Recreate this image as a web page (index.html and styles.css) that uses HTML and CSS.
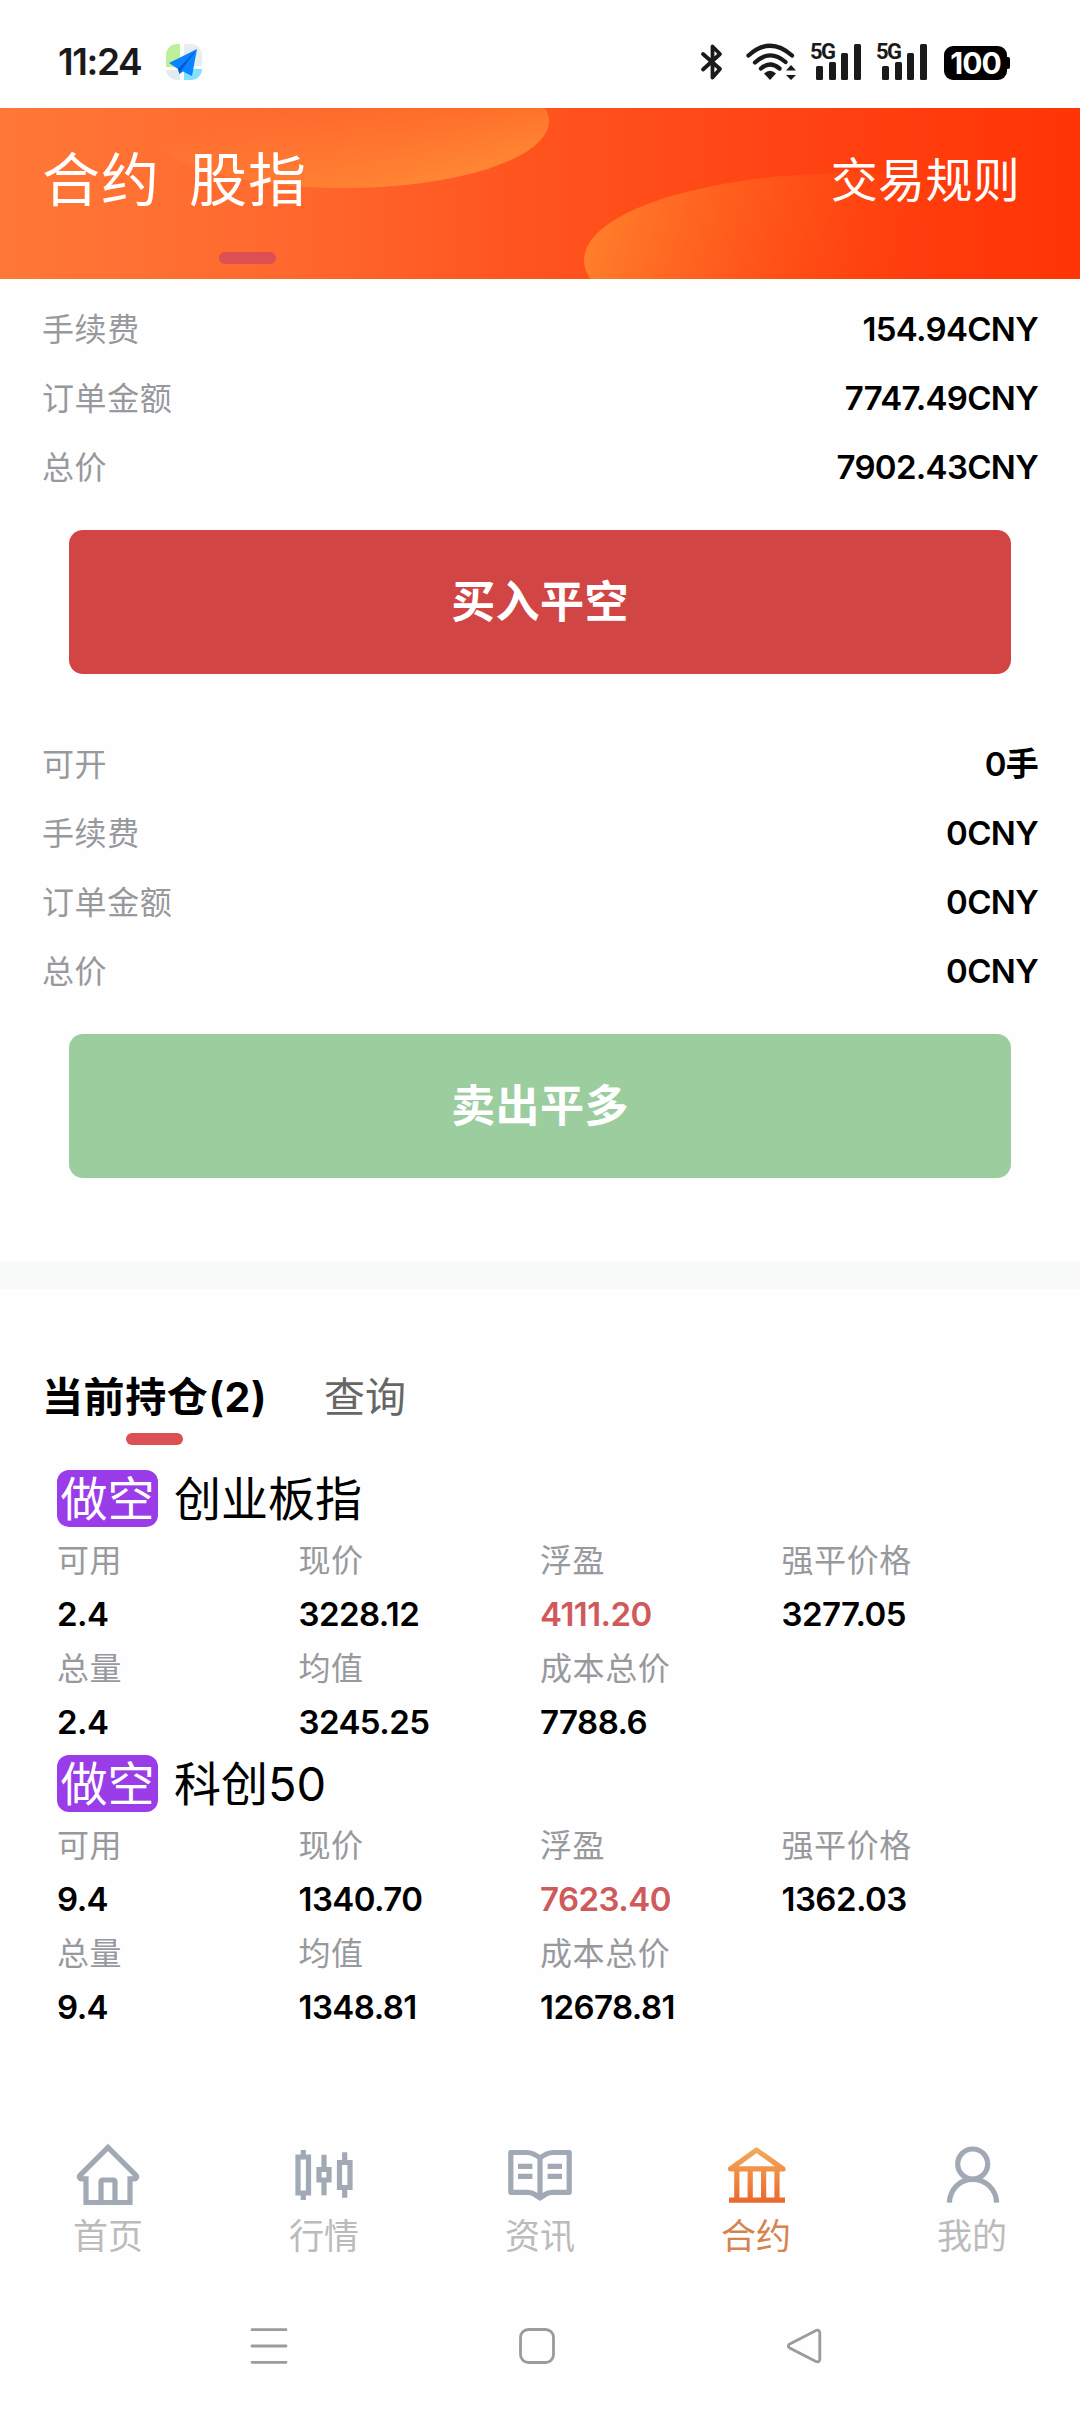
FILE: index.html
```
<!DOCTYPE html>
<html lang="zh-CN">
<head>
  <meta charset="UTF-8" />
  <meta name="viewport" content="width=device-width, initial-scale=1" />
  <title>合约</title>
  <link rel="stylesheet" href="styles.css">
</head>
<body>
  <div class="status-bar">
    <span class="time">11:24</span>
    <svg class="app-icon" width="36" height="36" viewBox="0 0 36 36">
      <defs>
        <clipPath id="app-clip"><rect width="36" height="36" rx="11"/></clipPath>
      </defs>
      <g clip-path="url(#app-clip)">
        <rect width="14" height="23" fill="#bdf09a"/>
        <rect x="18" width="18" height="22" fill="#e6eeef"/>
        <rect y="26" width="14" height="10" fill="#e3ebee"/>
        <rect x="18" y="25" width="18" height="11" fill="#85e0ff"/>
      </g>
      <path d="M31 5 26 32 17 27.500 13.500 30 12 25 3 19z" fill="#0a84ff"/>
      <path d="M31 5 12 25l1.500 5 2-4z" fill="#0756d8"/>
    </svg>
    <div class="status-icons">
      <svg class="bluetooth" width="24" height="38" viewBox="0 0 24 38">
        <path d="M3 11 20 26l-7.500 8.500V3.500l7.500 7.500L3 26.500" fill="none" stroke="#1a1a1a" stroke-width="3.800" stroke-linejoin="round" stroke-linecap="round"/>
      </svg>
      <svg class="wifi" width="52" height="38" viewBox="0 0 52 38">
        <g fill="none" stroke="#1a1a1a" stroke-width="4.300" stroke-linecap="round">
          <path d="M3.500 12.500Q25 -7 47 12.500"/>
          <path d="M10 19.500Q25 5.500 40.500 19"/>
          <path d="M16 25.500Q25 17.500 34.500 25.500"/>
        </g>
        <path d="M25 37l-6-6.500q6-5.500 12 0z" fill="#1a1a1a"/>
        <path d="M46 22l5 5.500H41zM46 37l5-5H41z" fill="#1a1a1a"/>
      </svg>
      <div class="signal">
        <span>5G</span>
        <i class="bar b1"></i><i class="bar b2"></i><i class="bar b3"></i><i class="bar b4"></i>
      </div>
      <div class="signal">
        <span>5G</span>
        <i class="bar b1"></i><i class="bar b2"></i><i class="bar b3"></i><i class="bar b4"></i>
      </div>
      <div class="battery">100</div>
    </div>
  </div>

  <div class="header">
    <svg class="header-bg" width="1080" height="171" viewBox="0 0 1080 171">
      <defs>
        <linearGradient id="bg" x1="0" x2="1" y1="0" y2="0">
          <stop offset="0" stop-color="#ff7838"/>
          <stop offset="0.280" stop-color="#ff672d"/>
          <stop offset="0.500" stop-color="#ff531e"/>
          <stop offset="0.800" stop-color="#ff3f0f"/>
          <stop offset="1" stop-color="#ff3407"/>
        </linearGradient>
        <linearGradient id="blob1" gradientUnits="userSpaceOnUse" x1="300" y1="-10" x2="330" y2="100">
          <stop offset="0" stop-color="#ff8a35" stop-opacity="0"/>
          <stop offset="1" stop-color="#ff8a35" stop-opacity="0.900"/>
        </linearGradient>
        <linearGradient id="blob2" gradientUnits="userSpaceOnUse" x1="590" y1="110" x2="900" y2="200">
          <stop offset="0" stop-color="#ff802c"/>
          <stop offset="1" stop-color="#ff5014" stop-opacity="0"/>
        </linearGradient>
      </defs>
      <rect width="1080" height="171" fill="url(#bg)"/>
      <ellipse cx="344" cy="13" rx="205" ry="67" fill="url(#blob1)"/>
      <ellipse cx="855" cy="152" rx="271" ry="87" fill="url(#blob2)"/>
    </svg>
    <div class="header-tabs">
      <span class="header-tab">合约</span>
      <span class="header-tab active">股指</span>
    </div>
    <a class="rules">交易规则</a>
  </div>

  <div class="trade">
    <div class="row"><span class="label">手续费</span><span class="value">154.94CNY</span></div>
    <div class="row"><span class="label">订单金额</span><span class="value">7747.49CNY</span></div>
    <div class="row"><span class="label">总价</span><span class="value">7902.43CNY</span></div>
    <div class="btn buy">买入平空</div>
    <div class="row"><span class="label">可开</span><span class="value">0手</span></div>
    <div class="row"><span class="label">手续费</span><span class="value">0CNY</span></div>
    <div class="row"><span class="label">订单金额</span><span class="value">0CNY</span></div>
    <div class="row"><span class="label">总价</span><span class="value">0CNY</span></div>
    <div class="btn sell">卖出平多</div>
  </div>

  <div class="divider"></div>

  <div class="tabs">
    <span class="tab active">当前持仓(2)</span>
    <span class="tab">查询</span>
  </div>

  <div class="positions">
    <div class="position">
      <div class="position-title"><span class="badge">做空</span><span class="name">创业板指</span></div>
      <div class="grid">
        <span class="label">可用</span><span class="label">现价</span><span class="label">浮盈</span><span class="label">强平价格</span>
        <span class="value">2.4</span><span class="value">3228.12</span><span class="value profit">4111.20</span><span class="value">3277.05</span>
        <span class="label">总量</span><span class="label">均值</span><span class="label">成本总价</span><span></span>
        <span class="value">2.4</span><span class="value">3245.25</span><span class="value">7788.6</span><span></span>
      </div>
    </div>
    <div class="position">
      <div class="position-title"><span class="badge">做空</span><span class="name">科创50</span></div>
      <div class="grid">
        <span class="label">可用</span><span class="label">现价</span><span class="label">浮盈</span><span class="label">强平价格</span>
        <span class="value">9.4</span><span class="value">1340.70</span><span class="value profit">7623.40</span><span class="value">1362.03</span>
        <span class="label">总量</span><span class="label">均值</span><span class="label">成本总价</span><span></span>
        <span class="value">9.4</span><span class="value">1348.81</span><span class="value">12678.81</span><span></span>
      </div>
    </div>
  </div>

  <div class="tabbar">
    <div class="tabbar-item">
      <svg width="72" height="72" viewBox="0 0 72 72">
        <path d="M14 38.800H9.500a2 2 0 0 1-1.500-3.400L36 7.500l28 27.900a2 2 0 0 1-1.500 3.400H58V62.500H14z"/>
        <path d="M29 62V42q0-2 2-2H41q2 0 2 2V62"/>
      </svg>
      <span>首页</span>
    </div>
    <div class="tabbar-item">
      <svg width="72" height="72" viewBox="0 0 72 72">
        <path d="M10 17H20.500V53H10zM15.300 10v7M15.300 53v7"/>
        <path d="M31 29.500H41V40H31zM36 14.700V29M36 40v15.300"/>
        <path d="M51.500 22.500H62V47.500H51.500zM56.700 12.300v10M56.700 47.500v10.200"/>
      </svg>
      <span>行情</span>
    </div>
    <div class="tabbar-item">
      <svg width="72" height="72" viewBox="0 0 72 72">
        <path d="M6.800 12.500H23Q29 12.500 36 18Q43 12.500 49 12.500H65.200V52.300H48Q43 52.300 36 58Q29 52.300 24 52.300H6.800zM36 18V58" stroke-linejoin="round"/>
        <path d="M14 26.300H28.400M14 36.300H28.400M43.600 26.300H58M43.600 36.300H58"/>
      </svg>
      <span>资讯</span>
    </div>
    <div class="tabbar-item active">
      <svg width="72" height="72" viewBox="0 0 72 72">
        <defs>
          <linearGradient id="bank" gradientUnits="userSpaceOnUse" x1="0" y1="7" x2="0" y2="63">
            <stop offset="0" stop-color="#efab62"/>
            <stop offset="0.400" stop-color="#f19248"/>
            <stop offset="1" stop-color="#ea672b"/>
          </linearGradient>
        </defs>
        <g stroke="url(#bank)">
          <path d="M36.500 10 10.500 28.900H63z" stroke-linejoin="round"/>
          <path d="M16.800 29V60M30.200 29V60M43.600 29V60M57 29V60"/>
          <path d="M9 60.200 65 60.100"/>
        </g>
      </svg>
      <span>合约</span>
    </div>
    <div class="tabbar-item">
      <svg width="72" height="72" viewBox="0 0 72 72">
        <circle cx="36.700" cy="24" r="15"/>
        <path d="M13.300 62.700C14 49 24 39.300 36.700 39.300S60.100 49 60.700 62.700"/>
      </svg>
      <span>我的</span>
    </div>
  </div>

  <div class="sysnav">
    <svg width="38" height="38" viewBox="0 0 38 38"><path d="M2 2.700H36M2 19H36M2 35.300H36"/></svg>
    <svg width="38" height="38" viewBox="0 0 38 38"><rect x="2.500" y="2.500" width="33" height="33" rx="8"/></svg>
    <svg width="38" height="38" viewBox="0 0 38 38"><path d="M3.300 17.200 29.500 3.700Q33.300 2.200 33.800 5.500V32.500Q33.300 35.800 29.500 34.300L3.300 20.800Q1.300 19 3.300 17.200z"/></svg>
  </div>
</body>
</html>
```

FILE: styles.css
```
* {
  box-sizing: border-box;
}
body {
  margin: 0;
  width: 1080px;
  height: 2412px;
  overflow: hidden;
  display: flex;
  flex-direction: column;
  background: #fefefe;
  color: #000;
  font-family: Inter, "Noto Sans CJK SC", sans-serif;
  font-weight: 400;
}

/* status bar */
.status-bar {
  height: 108px;
  flex: none;
  display: flex;
  align-items: center;
  padding: 16px 70px 0 58px;
  color: #1a1a1a;
}
.time {
  width: 108px;
  margin-top: -1px;
  font-size: 37px;
  font-weight: 600;
  letter-spacing: -1.4px;
}
.status-icons {
  margin-left: auto;
  display: flex;
  align-items: center;
}
.wifi {
  margin-left: 21px;
}
.signal {
  position: relative;
  width: 46px;
  height: 36px;
  margin-left: 20px;
  display: flex;
  align-items: flex-end;
  justify-content: flex-end;
  gap: 5.300px;
}
.signal:first-of-type {
  margin-left: 18px;
}
.signal span {
  position: absolute;
  left: -5px;
  top: -2px;
  font-family: Roboto, sans-serif;
  font-size: 22px;
  line-height: 20px;
  font-weight: 700;
  letter-spacing: -1.500px;
}
.bar {
  width: 7.300px;
  border-radius: 1.500px;
  background: #1a1a1a;
}
.b1 { height: 14px; }
.b2 { height: 18px; }
.b3 { height: 27px; }
.b4 { height: 36px; }
.battery {
  position: relative;
  width: 63px;
  height: 34px;
  margin: 2px 3px 0 17px;
  border-radius: 9px;
  background: #000;
  color: #fff;
  font-size: 30px;
  line-height: 34px;
  font-weight: 700;
  letter-spacing: -0.900px;
  text-align: center;
}
.battery::after {
  content: "";
  position: absolute;
  right: -3px;
  top: 11px;
  width: 5px;
  height: 12px;
  border-radius: 2px;
  background: #000;
}

/* header */
.header {
  position: relative;
  height: 171px;
  flex: none;
  display: flex;
  justify-content: space-between;
  padding: 22px 60px 0 42px;
  color: #fff;
}
.header-bg {
  position: absolute;
  left: 0;
  top: 0;
}
.header-tabs {
  position: relative;
  display: flex;
  gap: 29px;
}
.header-tab {
  position: relative;
  font-size: 58px;
  line-height: 100px;
  letter-spacing: 1px;
}
.rules {
  position: relative;
  font-size: 47px;
  line-height: 100px;
  letter-spacing: 0.300px;
}
.header-tab.active::after,
.tab.active::after {
  content: "";
  position: absolute;
  left: 50%;
  width: 57px;
  height: 12px;
  margin-left: -29px;
  border-radius: 6px;
  background: #dc5054;
}
.header-tab.active::after {
  top: 122px;
}

/* order summary */
.trade {
  flex: none;
  padding: 16px 42px 84px;
}
.row {
  height: 69px;
  display: flex;
  justify-content: space-between;
  line-height: 69px;
}
.label {
  font-size: 32px;
  letter-spacing: 0.600px;
  color: #97999d;
}
.value {
  font-size: 33px;
  font-weight: 600;
  letter-spacing: -0.700px;
}
.btn {
  height: 144px;
  margin: 28px 27px 0;
  border-radius: 14px;
  color: #fff;
  font-size: 44px;
  line-height: 144px;
  font-weight: 700;
  letter-spacing: 0.400px;
  text-align: center;
}
.buy {
  margin-bottom: 56px;
  background: #d14545;
}
.sell {
  background: #9bcd9f;
}
.divider {
  height: 27px;
  flex: none;
  background: #f8faf9;
}

/* positions */
.tabs {
  height: 174px;
  flex: none;
  display: flex;
  gap: 57px;
  padding: 71px 42px 0;
}
.tab {
  position: relative;
  font-size: 41px;
  line-height: 74px;
  color: #666;
}
.tab.active {
  font-weight: 700;
  letter-spacing: 0.600px;
  color: #000;
}
.tab.active::after {
  top: 73px;
  margin-left: -28px;
}
.positions {
  height: 664px;
  flex: none;
  padding: 1px 57px 0;
}
.position-title {
  height: 69px;
  display: flex;
  align-items: center;
  gap: 16px;
  font-size: 47px;
}
.badge {
  width: 101px;
  height: 57px;
  border-radius: 12px;
  background: #9a3de8;
  color: #fff;
  line-height: 57px;
  text-align: center;
}
.name {
  line-height: 57px;
}
.grid {
  display: grid;
  grid-template-columns: repeat(4, 241.500px);
  grid-auto-rows: 54px;
  line-height: 55px;
}
.grid .value {
  line-height: 54px;
  letter-spacing: -0.550px;
}
.profit {
  color: #cf595b;
}

/* bottom navigation */
.tabbar {
  flex: none;
  height: 184px;
  display: flex;
  padding-top: 13px;
}
.tabbar-item {
  width: 216px;
  display: flex;
  flex-direction: column;
  align-items: center;
  font-size: 35px;
  line-height: 48px;
  color: #bbb;
}
.tabbar-item svg {
  fill: none;
  stroke: #a1a9b4;
  stroke-width: 5.200;
}
.tabbar-item.active {
  color: #d5834f;
}
.sysnav {
  flex: none;
  height: 100px;
  display: flex;
  align-items: flex-start;
  justify-content: center;
  gap: 230px;
  padding: 16px 7px 0 0;
}
.sysnav svg {
  fill: none;
  stroke: #9b9b9b;
  stroke-width: 2.800;
  stroke-linecap: round;
}
```
